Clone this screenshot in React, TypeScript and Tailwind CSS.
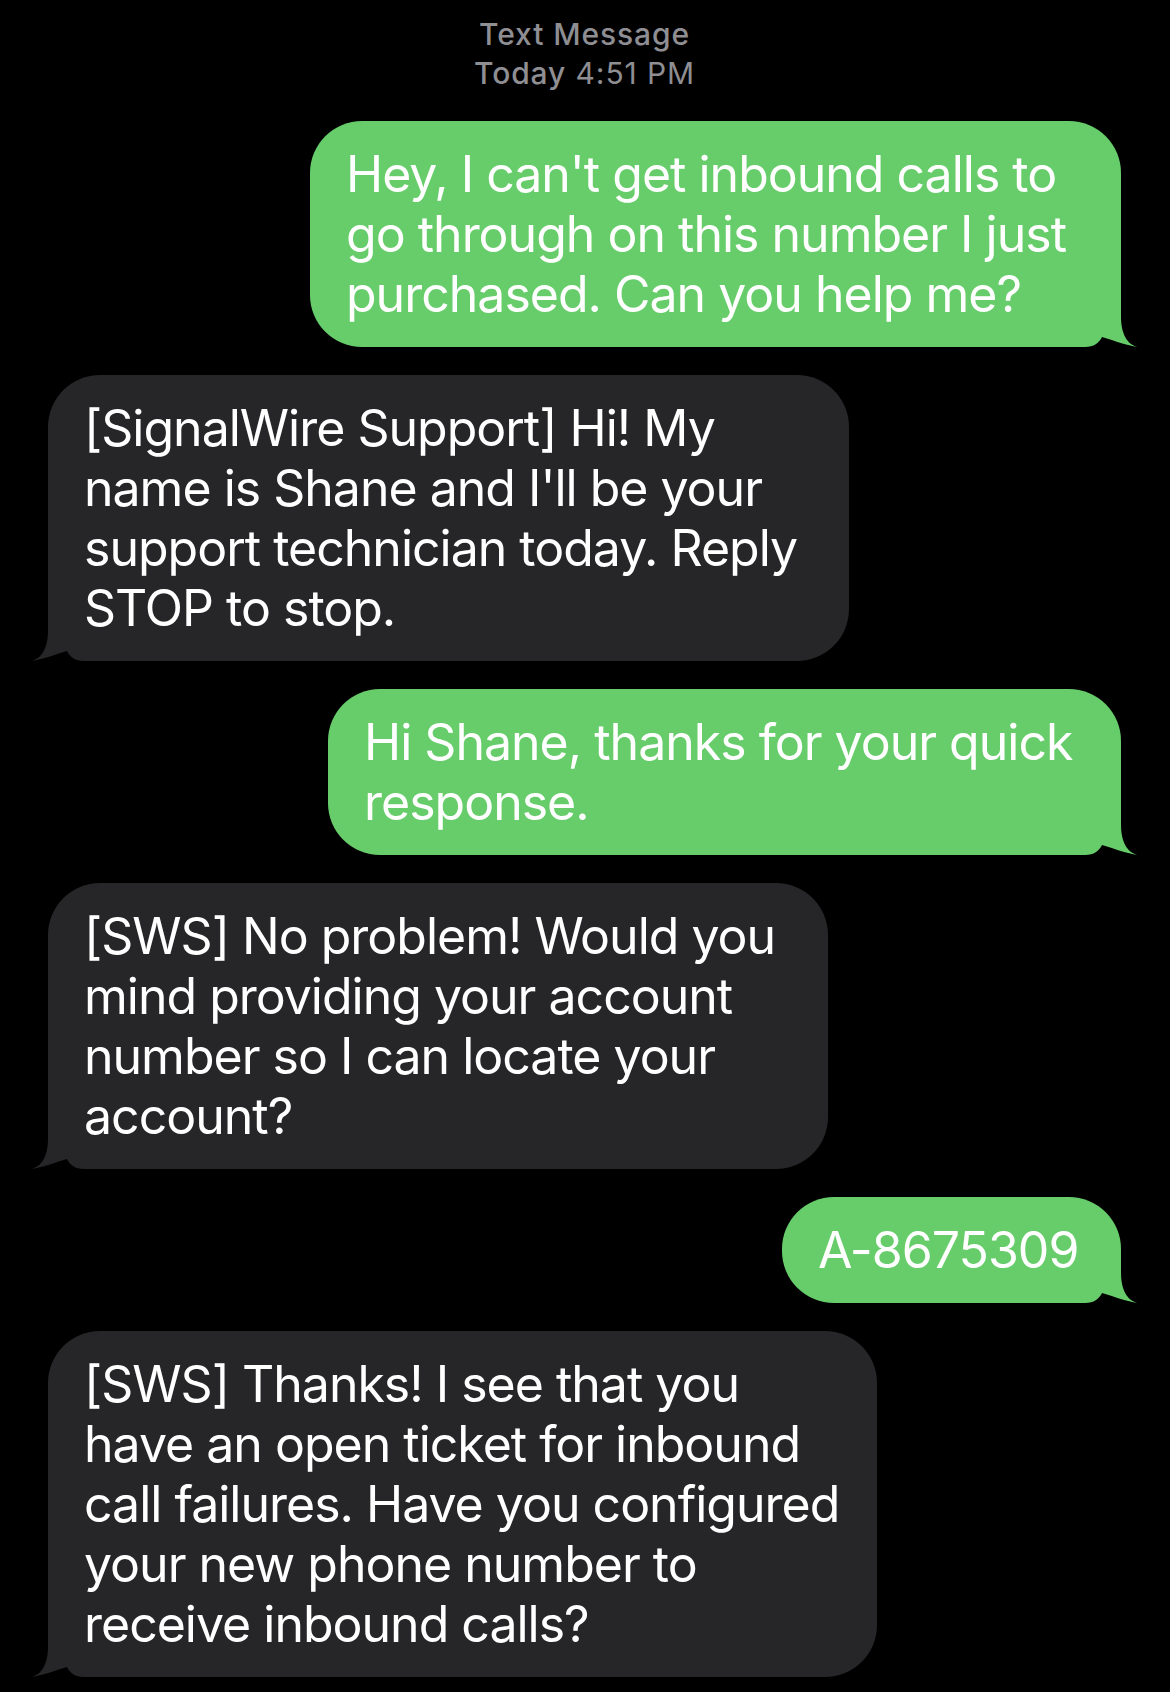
import React from "react";

type Msg = { from: "me" | "them"; lines: string[]; width: string };

const messages: Msg[] = [
  {
    from: "me",
    width: "w-[811px]",
    lines: ["Hey, I can't get inbound calls to", "go through on this number I just", "purchased. Can you help me?"],
  },
  {
    from: "them",
    width: "w-[801px]",
    lines: ["[SignalWire Support] Hi! My", "name is Shane and I'll be your", "support technician today. Reply", "STOP to stop."],
  },
  {
    from: "me",
    width: "w-[793px]",
    lines: ["Hi Shane, thanks for your quick", "response."],
  },
  {
    from: "them",
    width: "w-[780px]",
    lines: ["[SWS] No problem! Would you", "mind providing your account", "number so I can locate your", "account?"],
  },
  {
    from: "me",
    width: "w-[339px]",
    lines: ["A-8675309"],
  },
  {
    from: "them",
    width: "w-[829px]",
    lines: [
      "[SWS] Thanks! I see that you",
      "have an open ticket for inbound",
      "call failures. Have you configured",
      "your new phone number to",
      "receive inbound calls?",
    ],
  },
];

const TAIL = "M0 -52 L0 -30 C0 -14 6 -2 17 0 C8 -1 -6 -6 -19 -10 C-22 -4 -27 0 -36 0 L-52 0 Z";

function Tail({ side }: { side: "me" | "them" }) {
  if (side === "me") {
    return (
      <svg
        viewBox="-52 -52 70 52"
        width={70}
        height={52}
        className="absolute bottom-0 right-[-18px] text-[#66cd6a]"
        aria-hidden
      >
        <path d={TAIL} fill="currentColor" />
      </svg>
    );
  }
  return (
    <svg
      viewBox="-18 -52 70 52"
      width={70}
      height={52}
      className="absolute bottom-0 left-[-18px] text-[#262628]"
      aria-hidden
    >
      <g transform="scale(-1 1)">
        <path d={TAIL} fill="currentColor" />
      </g>
    </svg>
  );
}

function Bubble({ m }: { m: Msg }) {
  const me = m.from === "me";
  return (
    <div className={`flex ${me ? "justify-end" : "justify-start"}`}>
      <div
        className={`relative ${m.width} rounded-[52px] py-[23px] pl-[36px] ${
          me ? "bg-[#66cd6a]" : "bg-[#262628]"
        }`}
      >
        <div className="relative z-10 text-[50px] leading-[60px] tracking-[-0.02em] text-white">
          {m.lines.map((l, i) => (
            <div key={i} className="whitespace-nowrap">
              {l}
            </div>
          ))}
        </div>
        <Tail side={m.from} />
      </div>
    </div>
  );
}

export default function App() {
  return (
    <div className="min-h-[1692px] w-[1170px] bg-black font-['Inter','Noto_Sans',sans-serif] antialiased">
      <div className="flex flex-col gap-[28px] pl-[48px] pr-[49px] pt-[15px] pb-[14px]">
        <div className="flex flex-col items-center text-[30px] leading-[39px] tracking-[0.03em] text-[#8e8e93]">
          <div className="font-medium">Text Message</div>
          <div>
            <span className="font-medium">Today</span> 4:51 PM
          </div>
        </div>
        {messages.map((m, i) => (
          <Bubble key={i} m={m} />
        ))}
      </div>
    </div>
  );
}
